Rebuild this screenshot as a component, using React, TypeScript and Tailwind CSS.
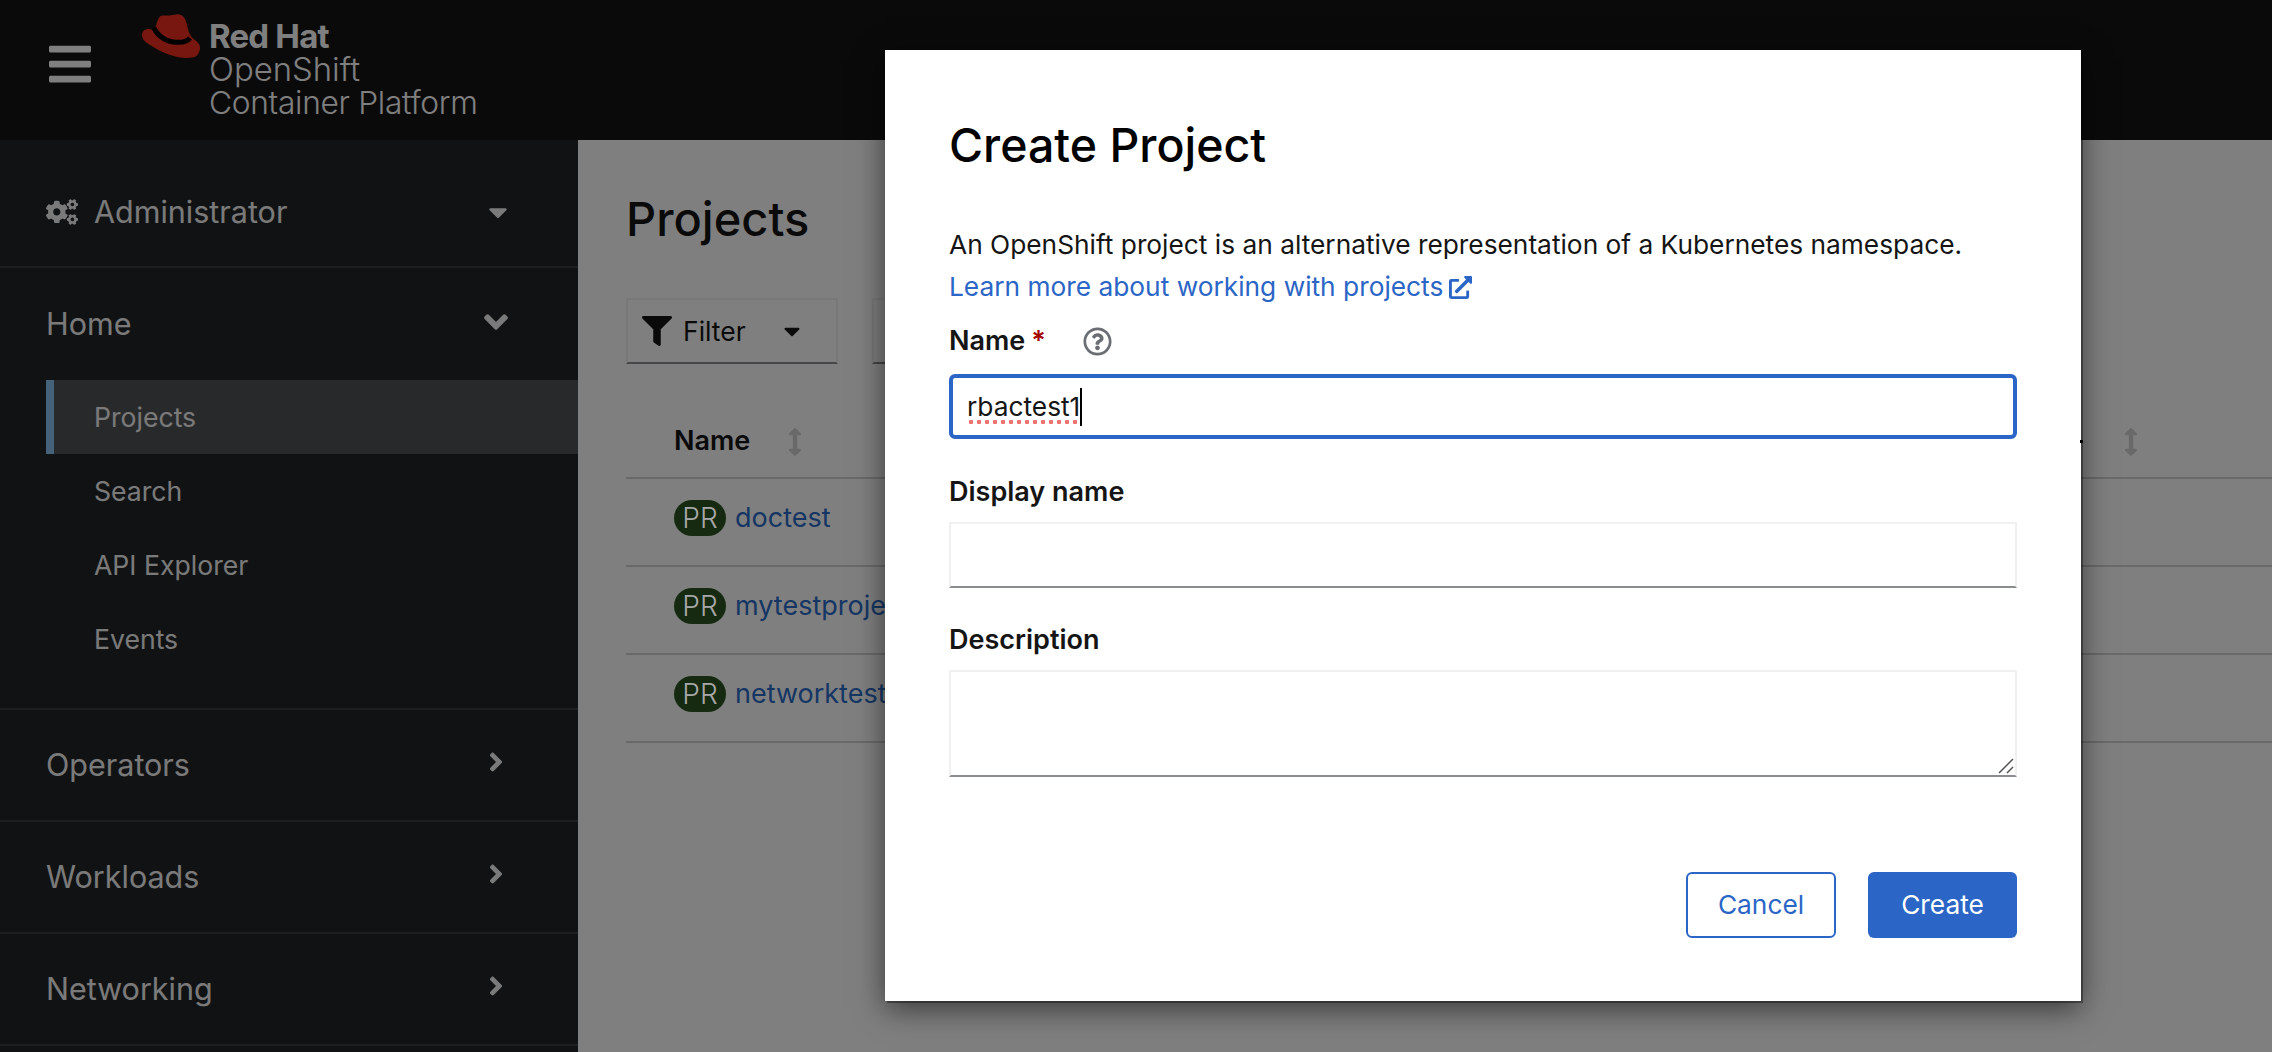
import { FaAngleDown, FaAngleRight, FaArrowsAltV, FaBars, FaCaretDown, FaCogs, FaExternalLinkAlt, FaFilter, FaRegQuestionCircle } from "react-icons/fa";

const subItems = ["Projects", "Search", "API Explorer", "Events"];
const collapsed = ["Operators", "Workloads", "Networking"];
const projects = ["doctest", "mytestproject", "networktest"];

function RedHatLogo() {
  return (
    <div className="flex items-start">
      <svg viewBox="0 0 58 44" className="mt-[14px] h-[44px] w-[58px] shrink-0">
        <path
          d="M18 2.500c2-2 6-.5 10-1 4-.5 8-2 11-.5 4 2 5 6 6 10 1 5 2 9 5 12.500 3 3 8 5 8 10 0 5-3 10-8 10-7 1-14 0-20-2-7-2-15-6-21-10C4 29 0 25 0 21c0-4 3-6 7-6 2 0 4 1 6 1 1-4 2-10 5-13.500z"
          fill="#f02e20"
        />
        <path d="M12 14c3 7 11 13 19 14 8 1 14 0 17-4" fill="none" stroke="#000" strokeWidth="5" />
      </svg>
      <div className="ml-[9px] mt-[20px] flex flex-col text-white">
        <span className="text-[33px] font-bold leading-[33px] tracking-[-0.8px]">Red Hat</span>
        <span className="text-[32.800px] font-light leading-[33px]">OpenShift</span>
        <span className="text-[31.700px] font-light leading-[33px] tracking-[-0.3px]">Container Platform</span>
      </div>
    </div>
  );
}

function Sidebar() {
  return (
    <aside className="h-[912px] w-[578px] shrink-0 overflow-hidden bg-[#212427] text-[30.500px] text-[#f5f5f5]">
      <div className="flex h-[128px] items-center border-b-2 border-[#3c3f42] pl-[46px] pr-[70px] pt-[18px]">
        <FaCogs className="h-[28px] w-[32px]" />
        <span className="ml-[16px]">Administrator</span>
        <FaCaretDown className="ml-auto h-[30px] w-[20px]" />
      </div>
      <div className="border-b-2 border-[#3c3f42] pb-[32px]">
        <div className="flex h-[112px] items-center pl-[46px] pr-[70px]">
          <span>Home</span>
          <FaAngleDown className="ml-auto -mt-[4px] h-[38px] w-[24px]" />
        </div>
        {subItems.map((item, i) => (
          <div
            key={item}
            className={
              i === 0
                ? "ml-[46px] flex h-[74px] items-center border-l-8 border-[#8cc4f5] bg-[#505356] pl-[40px] pt-[2px] text-[26.600px]"
                : "ml-[46px] flex h-[74px] items-center pl-[48px] pt-[2px] text-[26.600px]"
            }
          >
            {item}
          </div>
        ))}
      </div>
      {collapsed.map((item) => (
        <div key={item} className="flex h-[112px] items-center border-b-2 border-[#3c3f42] pl-[46px] pr-[72px]">
          <span>{item}</span>
          <FaAngleRight className="ml-auto -mt-[6px] h-[30px] w-[20px]" />
        </div>
      ))}
    </aside>
  );
}

function ProjectsPage() {
  return (
    <main className="min-w-0 flex-1 overflow-hidden bg-white pl-[48px] text-[#151515]">
      <h1 className="mt-[45px] h-[68px] text-[47px] font-medium leading-[68px]">Projects</h1>
      <div className="mt-[45px] flex gap-[34px]">
        <div className="flex h-[66px] w-[212px] items-center border-2 border-[#f0f0f0] border-b-[#8a8d90] pl-[14px]">
          <FaFilter className="h-[30px] w-[30px]" />
          <span className="ml-[11px] pt-[2px] text-[26.500px]">Filter</span>
          <FaCaretDown className="ml-[37px] h-[26px] w-[18px]" />
        </div>
        <div className="h-[66px] w-[700px] border-2 border-[#f0f0f0] border-b-[#8a8d90]" />
      </div>
      <div className="mt-[48px] flex h-[67px] items-center border-b-2 border-[#d2d2d2] pl-[48px] pb-[6px]">
        <span className="text-[27px] font-semibold">Name</span>
        <FaArrowsAltV className="ml-[38px] h-[28px] w-[14px] text-[#d2d2d2]" />
        <span className="relative z-30 ml-auto h-[3px] w-[3px] bg-black" />
        <FaArrowsAltV className="ml-[41px] mr-[134px] h-[28px] w-[14px] text-[#d2d2d2]" />
      </div>
      {projects.map((name) => (
        <div key={name} className="flex h-[88px] items-center border-b-2 border-[#d2d2d2] pl-[48px] pb-[8px]">
          <span className="flex h-[36px] w-[52px] items-center justify-center rounded-full bg-[#2a5420] text-[28px]">
            <span className="relative z-20 font-light text-[#a8a8a8]">PR</span>
          </span>
          <a className="ml-[9px] text-[27px] text-[#2b6cc8]">{name}</a>
        </div>
      ))}
    </main>
  );
}

function CreateProjectModal() {
  return (
    <div className="absolute left-[885px] top-[50px] z-20 h-[951px] w-[1196px] bg-white px-[64px] pt-[64px] text-[26.300px] leading-[42px] text-[#151515] shadow-[2px_2px_0_rgba(0,0,0,0.35),0_8px_28px_rgba(0,0,0,0.55)]">
      <h2 className="text-[46.500px] font-medium leading-[62px] text-black">Create Project</h2>
      <p className="mt-[48px]">An OpenShift project is an alternative representation of a Kubernetes namespace.</p>
      <a className="flex items-center text-[#2b66c6]">
        Learn more about working with projects
        <FaExternalLinkAlt className="ml-[6px] h-[23px] w-[23px]" />
      </a>
      <div className="mt-[12px] flex items-center text-[27px] font-semibold">
        Name <span className="ml-[6px] text-[#a30000]">*</span>
        <FaRegQuestionCircle className="ml-[37px] h-[29px] w-[29px] text-[#6a6e73]" />
      </div>
      <div className="mt-[12px] flex h-[65px] items-center rounded-[6px] border-4 border-[#2b66c6] pl-[14px]">
        <span className="relative">
          rbactest1
          <span className="absolute bottom-[3px] left-0 h-[6px] w-full bg-[radial-gradient(circle,#f0726c_2px,transparent_2.500px)] bg-[length:8px_6px]" />
        </span>
        <span className="h-[38px] w-[2px] bg-black" />
      </div>
      <label className="mt-[32px] block text-[27px] font-semibold">Display name</label>
      <input className="mt-[9px] block h-[66px] w-full border-2 border-[#f0f0f0] border-b-[#8a8d90] outline-none" />
      <label className="mt-[31px] block text-[27px] font-semibold">Description</label>
      <div className="relative mt-[9px]">
        <textarea className="block h-[107px] w-full resize-none border-2 border-[#f0f0f0] border-b-[#8a8d90] outline-none" />
        <svg viewBox="0 0 16 16" className="absolute bottom-[3px] right-[3px] h-[16px] w-[16px]">
          <path d="M1 15 15 1M9 15l6-6" stroke="#555" strokeWidth="1.500" fill="none" />
        </svg>
      </div>
      <div className="mt-[95px] flex justify-end gap-[32px]">
        <button className="h-[66px] w-[150px] rounded-[6px] border-2 border-[#2b66c6] text-[#2b66c6]">Cancel</button>
        <button className="h-[66px] w-[149px] rounded-[6px] bg-[#2b66c6] text-white">Create</button>
      </div>
    </div>
  );
}

export default function App() {
  return (
    <div className="relative h-[1052px] w-[2272px] overflow-hidden font-['Inter',sans-serif]">
      <header className="flex h-[140px] bg-[#151515]">
        <FaBars className="ml-[49px] mt-[34px] h-[60px] w-[42px] text-white" />
        <div className="ml-[51px]">
          <RedHatLogo />
        </div>
      </header>
      <div className="flex">
        <Sidebar />
        <ProjectsPage />
      </div>
      <div className="absolute inset-0 z-10 bg-black/50" />
      <CreateProjectModal />
    </div>
  );
}
